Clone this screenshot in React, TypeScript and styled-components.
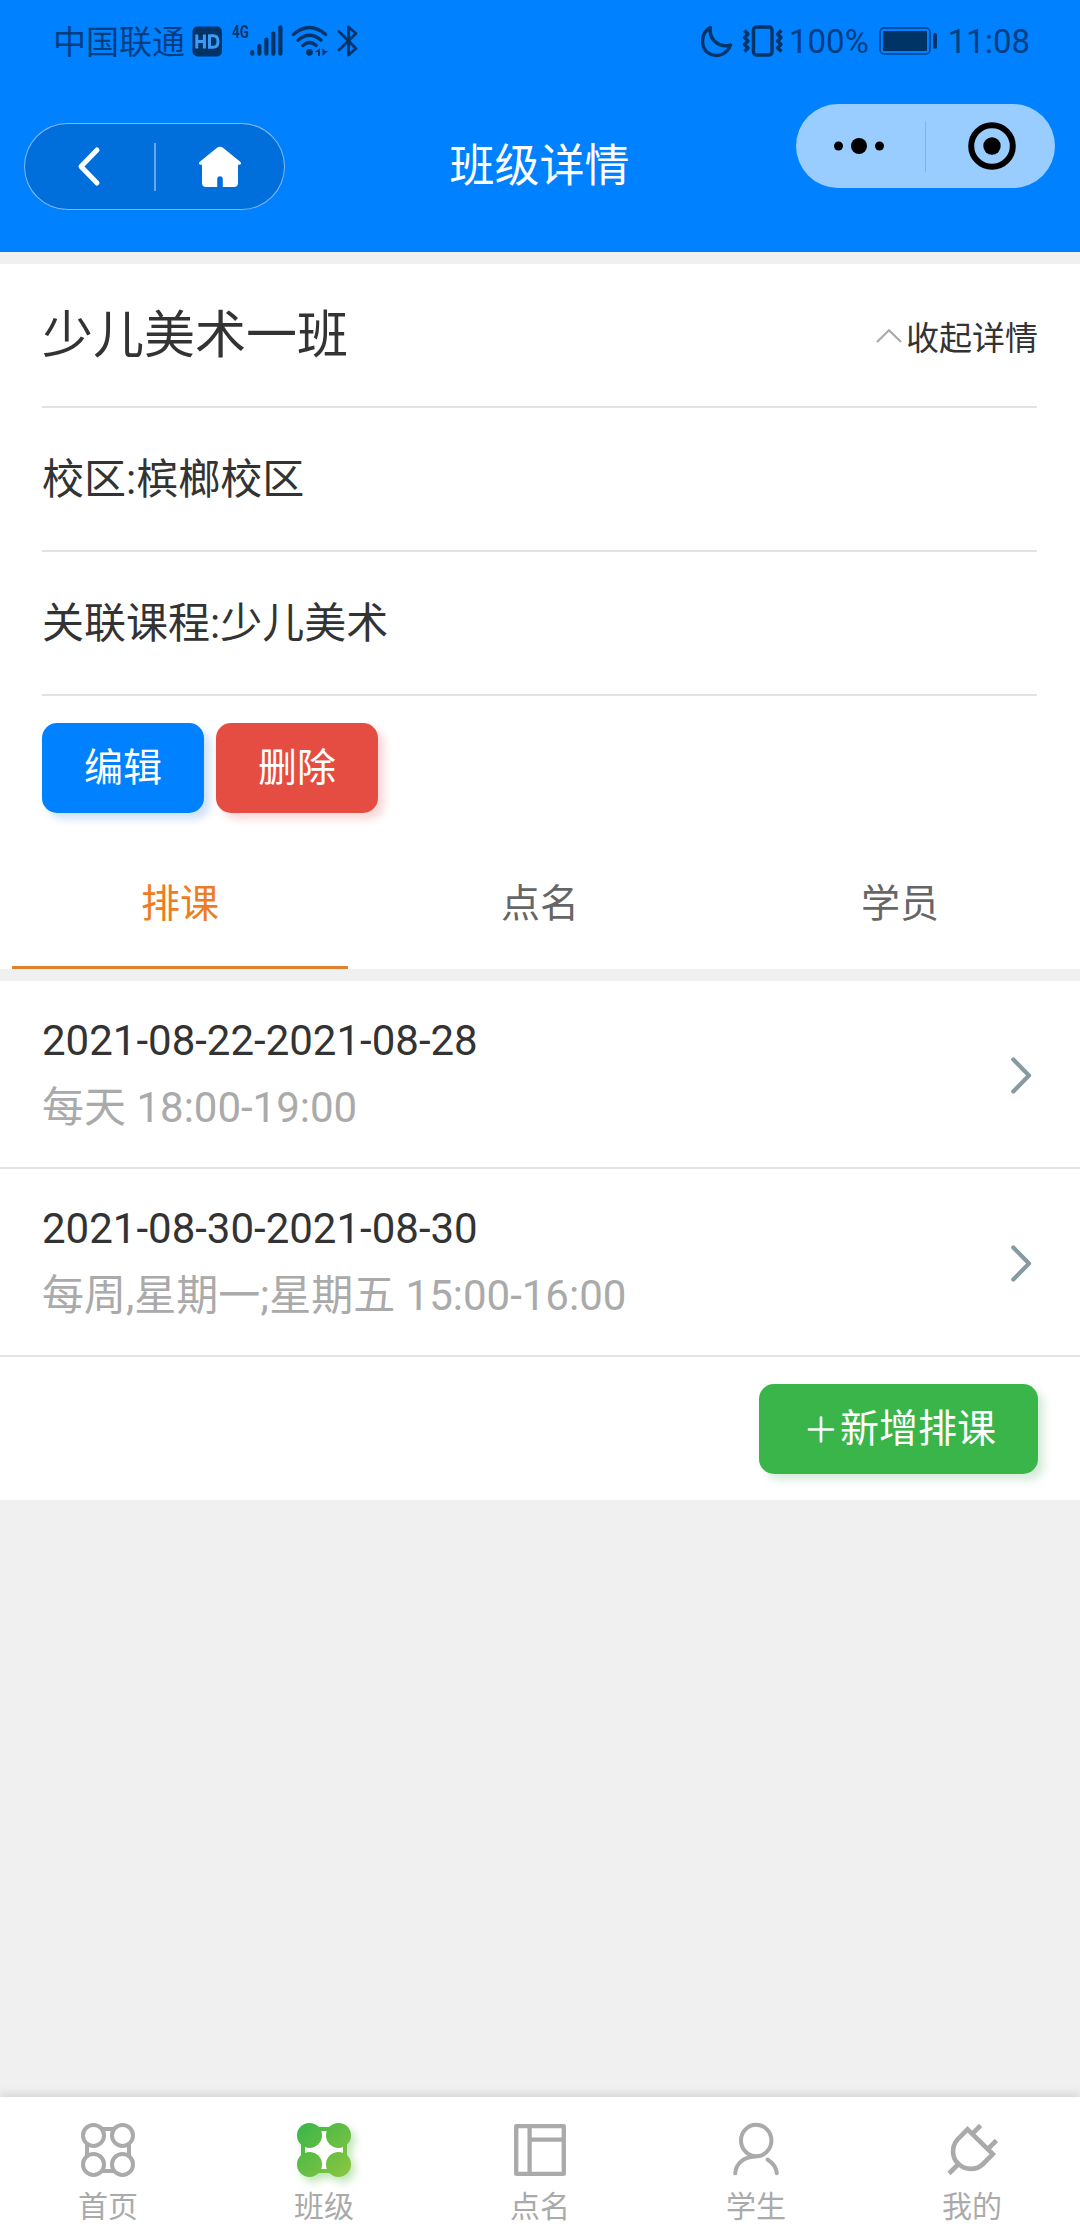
import React from "react";
import styled, { createGlobalStyle, css } from "styled-components";

const Global = createGlobalStyle`
  * { box-sizing: border-box; }
  html, body { margin: 0; padding: 0; background: #f0f0f0; }
  body {
    font-family: Roboto, "Noto Sans CJK SC", sans-serif;
    font-weight: 400;
    color: #333;
  }
`;

const Screen = styled.div`
  width: 1080px;
  height: 2240px;
  display: flex;
  flex-direction: column;
  background: #f0f0f0;
  overflow: hidden;
`;

const Header = styled.header`
  height: 252px;
  flex: none;
  background: #0081ff;
`;

const StatusBar = styled.div`
  height: 82px;
  padding: 0 50px 0 53px;
  display: flex;
  justify-content: space-between;
  color: #003e80;
  font-size: 33px;
  line-height: 78px;
  svg { display: block; flex: none; }
`;

const StatusGroup = styled.div`
  display: flex;
  align-items: center;
`;

const StatusText = styled.span<{ $ml?: number; $drop?: number }>`
  margin-left: ${(p) => p.$ml ?? 0}px;
  padding-top: ${(p) => p.$drop ?? 0}px;
`;

const NavBar = styled.div`
  height: 170px;
  display: grid;
  grid-template-columns: 1fr auto 1fr;
  padding: 0 25px 0 24px;
`;

const NavTitle = styled.h1`
  margin: 0;
  font-size: 45px;
  line-height: 60px;
  font-weight: 400;
  color: #fff;
  padding-top: 55px;
`;

const BackCapsule = styled.div`
  width: 261px;
  height: 87px;
  margin-top: 41px;
  border: 1.5px solid rgba(255, 255, 255, 0.5);
  border-radius: 44px;
  background: #006edb;
  display: flex;
  align-items: center;
  svg { display: block; }
`;

const MenuCapsule = styled.div`
  width: 259px;
  height: 84px;
  margin-top: 22px;
  justify-self: end;
  border-radius: 42px;
  background: #99cdff;
  display: flex;
  align-items: center;
`;

const CapsuleHalf = styled.div<{ $left?: number; $right?: number }>`
  flex: 1;
  display: flex;
  justify-content: center;
  padding: 0 ${(p) => p.$right ?? 0}px 0 ${(p) => p.$left ?? 0}px;
`;

const CapsuleRule = styled.i<{ $h: number; $w: number; $c: string }>`
  width: ${(p) => p.$w}px;
  height: ${(p) => p.$h}px;
  background: ${(p) => p.$c};
`;

const Card = styled.section`
  flex: none;
  margin-top: 12px;
  background: #fff;
`;

const Details = styled.div`
  padding: 0 42px;
`;

const DetailRow = styled.div`
  height: 144px;
  display: flex;
  align-items: center;
  justify-content: space-between;
  border-bottom: 2px solid #e2e2e2;
  font-size: 42px;
  padding-bottom: 8px;
  margin-right: 1px;
`;

const ClassName = styled.h2`
  margin: 0;
  font-size: 51px;
  font-weight: 400;
`;

const Toggle = styled.div`
  display: flex;
  align-items: center;
  gap: 4px;
  margin-right: -1px;
  padding-top: 10px;
  font-size: 33px;
`;

const Actions = styled.div`
  height: 144px;
  padding-top: 27px;
  display: flex;
  gap: 12px;
`;

const tones = {
  blue: css`background: #0081ff; box-shadow: 6px 6px 8px rgba(0, 102, 204, 0.2);`,
  red: css`background: #e54d42; box-shadow: 6px 6px 8px rgba(217, 55, 44, 0.2);`,
  green: css`background: #39b54a; box-shadow: 6px 6px 8px rgba(48, 156, 63, 0.2);`,
};

const Button = styled.button<{ $tone: keyof typeof tones }>`
  height: 90px;
  padding: 0 42px;
  border: 0;
  border-radius: 15px;
  color: #fff;
  font: inherit;
  font-size: 39px;
  line-height: 1;
  display: flex;
  align-items: center;
  svg { margin-top: -3px; }
  ${(p) => tones[p.$tone]}
`;

const Tabs = styled.div`
  height: 129px;
  display: grid;
  grid-template-columns: repeat(3, 1fr);
`;

const Tab = styled.div<{ $active?: boolean }>`
  margin: 0 12px;
  padding-top: 3px;
  text-align: center;
  font-size: 39px;
  line-height: 122px;
  height: 129px;
  color: ${(p) => (p.$active ? "#ed7d21" : "#666")};
  border-bottom: 3px solid ${(p) => (p.$active ? "#e08031" : "transparent")};
`;

const Schedule = styled.div`
  height: 188px;
  padding: 0 48px 0 42px;
  display: flex;
  align-items: center;
  justify-content: space-between;
  border-bottom: 2px solid #e2e2e2;
  font-size: 42px;
  line-height: 67px;
  svg { margin-top: 1px; }
`;

const Dates = styled.div``;

const Times = styled.div`
  color: #aaa;
`;

const AddRow = styled.div`
  height: 143px;
  padding: 27px 42px 0;
  display: flex;
  justify-content: flex-end;
  align-items: flex-start;
`;

const TabBar = styled.nav`
  height: 143px;
  flex: none;
  margin-top: auto;
  background: #fff;
  box-shadow: 0 -3px 9px rgba(0, 0, 0, 0.12);
  display: grid;
  grid-template-columns: repeat(5, 1fr);
`;

const TabBarItem = styled.div`
  display: flex;
  flex-direction: column;
  align-items: center;
  padding-top: 23px;
  font-size: 30px;
  line-height: 44px;
  color: #aaa;
  svg { display: block; overflow: visible; margin-bottom: 5px; }
`;

const INK = "#003366";

const HdIcon = () => (
  <svg width="31" height="31" viewBox="0 0 31 31" style={{ marginLeft: 7 }}>
    <rect x="0.5" y="0.5" width="29.5" height="30" rx="5" fill={INK} />
    <g stroke="#3d9bf5" strokeWidth="3" fill="none">
      <path d="M4.8 8.5v14M12.4 8.5v14M4.8 15.5h8" />
      <path d="M17.5 9.8h3.700q4.800 0 4.800 5.700t-4.800 5.700H17.500z" />
    </g>
  </svg>
);

const FourG = styled.span`
  font-weight: 700;
  font-size: 19px;
  line-height: 20px;
  height: 38px;
  margin-left: 9px;
  width: 18px;
  color: ${INK};
  span { display: inline-block; transform: scaleX(0.7); transform-origin: 0 0; }
`;

const SignalIcon = () => (
  <svg width="33" height="32" viewBox="0 0 33 32">
    <g stroke={INK} strokeWidth="4.2" strokeLinecap="round">
      <path d="M2.3 27.2v1.5M9.3 21v7.7M16.4 14.5v14.2M23.3 8.5v20.2M30.4 2.3v26.4" />
    </g>
  </svg>
);

const WifiIcon = () => (
  <svg width="38" height="32" viewBox="0 0 38 32" style={{ marginLeft: 8 }}>
    <g fill="none" stroke={INK} strokeWidth="3.2" strokeLinecap="round">
      <path d="M2.3 9.5Q18.5-4.500 34.700 9.500" />
      <path d="M7 15.200Q18.500 5.300 30 15.200" />
      <path d="M11.800 20.500Q18.500 14.500 25.200 20.500" />
    </g>
    <circle cx="18.500" cy="27.300" r="3.400" fill={INK} />
    <path d="M24 27l5-4v8h-2v-4zM31.500 23v8l5.500-5h-3z" fill={INK} />
  </svg>
);

const BluetoothIcon = () => (
  <svg width="22" height="34" viewBox="0 0 22 34" style={{ marginLeft: 8 }}>
    <path d="M2 7.500L19 24.500 11.500 31V3L19 9.500 2 26" fill="none" stroke={INK} strokeWidth="2.800" strokeLinecap="round" strokeLinejoin="round" />
  </svg>
);

const MoonIcon = () => (
  <svg width="32" height="33" viewBox="0 0 32 33">
    <path d="M9.300 2.500C-.5 8-.5 21.500 6.500 27.500c8 6 19.500 2.500 23-7.500C19 23.500 7.500 15 9.300 2.500z" fill="none" stroke={INK} strokeWidth="3.400" strokeLinejoin="round" />
  </svg>
);

const VibrateIcon = () => (
  <svg width="42" height="34" viewBox="0 0 42 34" style={{ marginLeft: 9 }}>
    <rect x="11.500" y="3" width="18.500" height="28" rx="3" fill="none" stroke={INK} strokeWidth="3.400" />
    <g fill="none" stroke={INK} strokeWidth="3.400" strokeLinejoin="round">
      <path d="M2.500 6.500l3.500 3.500-3.500 3.500L6 17l-3.500 3.500L6 24l-3.500 3.500" />
      <path d="M39.500 6.500l-4 3.500 3.500 3.500-3.500 3.500 3.500 3.500-3.500 3.500 4 3.500" />
    </g>
  </svg>
);

const BatteryIcon = () => (
  <svg width="60" height="29" viewBox="0 0 60 29" style={{ marginLeft: 10 }}>
    <rect x="1" y="1" width="50" height="26" rx="4" fill="none" stroke="#00438c" strokeWidth="1.500" />
    <rect x="4" y="4" width="44" height="20" rx="1" fill={INK} />
    <rect x="54" y="6" width="4" height="16" rx="2" fill={INK} />
  </svg>
);

const BackIcon = () => (
  <svg width="26" height="42" viewBox="0 0 26 42">
    <path d="M21 4L5 20.500 21 37" fill="none" stroke="#fff" strokeWidth="5" strokeLinecap="round" strokeLinejoin="round" />
  </svg>
);

const HomeIcon = () => (
  <svg width="44" height="42" viewBox="0 0 44 42">
    <path d="M19 1.700q3-2 6 0L42.500 16q1.500 2.500-1.500 2.800h-1V37q0 4-4 4H24.800V32.500q-.3-2.300-2.800-2.300t-2.800 2.300V41H8q-4 0-4-4V18.800H3Q0 18.500 1.500 16z" fill="#fff" />
  </svg>
);

const MoreIcon = () => (
  <svg width="50" height="18" viewBox="0 0 50 18">
    <circle cx="4.500" cy="9" r="4.500" />
    <circle cx="25" cy="9" r="8" />
    <circle cx="45.500" cy="9" r="4.500" />
  </svg>
);

const TargetIcon = () => (
  <svg width="48" height="48" viewBox="0 0 48 48">
    <circle cx="24" cy="24" r="20.800" fill="none" stroke="#000" strokeWidth="6" />
    <circle cx="24" cy="24" r="8.700" />
  </svg>
);

const FoldIcon = () => (
  <svg width="27" height="18" viewBox="0 0 27 18">
    <path d="M2 15L14 3.200 26 15" fill="none" stroke="#aaa" strokeWidth="2.200" />
  </svg>
);

const RowArrow = () => (
  <svg width="22" height="38" viewBox="0 0 22 38">
    <path d="M3.300 3.500L19 19.500 3.300 35.500" fill="none" stroke="#8799a3" strokeWidth="4.200" strokeLinecap="round" strokeLinejoin="round" />
  </svg>
);

const PlusIcon = () => (
  <svg width="39" height="39" viewBox="0 0 39 39">
    <path d="M8 21.500h24M20 9.500v24" stroke="#fff" strokeWidth="2.700" strokeLinecap="round" />
  </svg>
);

const corners = [
  [15.5, 15.4],
  [44.500, 15.4],
  [15.5, 44.400],
  [44.500, 44.400],
];

const CloverIcon = ({ active }: { active?: boolean }) => (
  <svg
    width="60"
    height="60"
    viewBox="0 0 60 60"
    style={active ? { filter: "drop-shadow(4px 5px 4px rgba(90,190,70,.4))" } : undefined}
  >
    <defs>
      <linearGradient id="leaf" gradientUnits="userSpaceOnUse" x1="3" y1="3" x2="57" y2="57">
        <stop offset="0" stopColor="#39b54a" />
        <stop offset="1" stopColor="#8dc63f" />
      </linearGradient>
    </defs>
    <rect x="9" y="9" width="42" height="42" fill="#fff" stroke={active ? "url(#leaf)" : "#aaa"} strokeWidth="4" />
    {corners.map(([x, y]) => (
      <circle
        key={`${x}-${y}`}
        cx={x}
        cy={y}
        r={active ? 12.500 : 10.500}
        fill={active ? "url(#leaf)" : "#fff"}
        stroke={active ? "none" : "#aaa"}
        strokeWidth="4"
      />
    ))}
  </svg>
);

const BoardIcon = () => (
  <svg width="60" height="60" viewBox="0 0 60 60">
    <path d="M6.200 6.200h47.600v47.600H6.200zM19.600 6.200v47.600M19.600 19.700h34" fill="none" stroke="#aaa" strokeWidth="4.300" strokeLinejoin="round" />
  </svg>
);

const PersonIcon = () => (
  <svg width="60" height="60" viewBox="0 0 60 60">
    <g fill="none" stroke="#aaa" strokeWidth="4" strokeLinecap="round">
      <ellipse cx="30.200" cy="20.500" rx="15.200" ry="15.800" />
      <path d="M29 36.500C18 37 10 43 9.200 53.300" />
      <path d="M41.500 39.500C47 43 50.300 48 50.800 53.300" />
    </g>
  </svg>
);

const PlugIcon = () => (
  <svg width="60" height="60" viewBox="0 0 60 60">
    <path
      d="M25.500 9.300L15.500 19.500C9 27 9.800 38 16.500 43.800C23.500 50.500 34.500 50.500 41 44L50.800 34zM38.600 5.500L30.500 13.600M54.400 20.500L46 28.900M15.500 45L7 53.500"
      fill="none"
      stroke="#aaa"
      strokeWidth="4.600"
    />
  </svg>
);

const schedules = [
  { dates: "2021-08-22-2021-08-28", times: "每天 18:00-19:00" },
  { dates: "2021-08-30-2021-08-30", times: "每周,星期一;星期五 15:00-16:00" },
];

const navItems = [
  { label: "首页", icon: <CloverIcon /> },
  { label: "班级", icon: <CloverIcon active /> },
  { label: "点名", icon: <BoardIcon /> },
  { label: "学生", icon: <PersonIcon /> },
  { label: "我的", icon: <PlugIcon /> },
];

export default function App() {
  return (
    <Screen>
      <Global />
      <Header>
        <StatusBar>
          <StatusGroup>
            <StatusText $drop={3}>中国联通</StatusText>
            <HdIcon />
            <FourG><span>4G</span></FourG>
            <SignalIcon />
            <WifiIcon />
            <BluetoothIcon />
          </StatusGroup>
          <StatusGroup>
            <MoonIcon />
            <VibrateIcon />
            <StatusText $ml={5} $drop={2}>100%</StatusText>
            <BatteryIcon />
            <StatusText $ml={9} $drop={2}>11:08</StatusText>
          </StatusGroup>
        </StatusBar>
        <NavBar>
          <BackCapsule>
            <CapsuleHalf $right={1}><BackIcon /></CapsuleHalf>
            <CapsuleRule $w={2} $h={48} $c="#66a8e9" />
            <CapsuleHalf $left={1}><HomeIcon /></CapsuleHalf>
          </BackCapsule>
          <NavTitle>班级详情</NavTitle>
          <MenuCapsule>
            <CapsuleHalf $right={2}><MoreIcon /></CapsuleHalf>
            <CapsuleRule $w={1} $h={51} $c="#7fb3e6" />
            <CapsuleHalf $left={3}><TargetIcon /></CapsuleHalf>
          </MenuCapsule>
        </NavBar>
      </Header>

      <Card>
        <Details>
          <DetailRow>
            <ClassName>少儿美术一班</ClassName>
            <Toggle><FoldIcon />收起详情</Toggle>
          </DetailRow>
          <DetailRow>校区:槟榔校区</DetailRow>
          <DetailRow>关联课程:少儿美术</DetailRow>
          <Actions>
            <Button $tone="blue">编辑</Button>
            <Button $tone="red">删除</Button>
          </Actions>
        </Details>
        <Tabs>
          <Tab $active>排课</Tab>
          <Tab>点名</Tab>
          <Tab>学员</Tab>
        </Tabs>
      </Card>

      <Card>
        {schedules.map((s) => (
          <Schedule key={s.dates}>
            <div>
              <Dates>{s.dates}</Dates>
              <Times>{s.times}</Times>
            </div>
            <RowArrow />
          </Schedule>
        ))}
        <AddRow>
          <Button $tone="green"><PlusIcon />新增排课</Button>
        </AddRow>
      </Card>

      <TabBar>
        {navItems.map((n) => (
          <TabBarItem key={n.label}>
            {n.icon}
            {n.label}
          </TabBarItem>
        ))}
      </TabBar>
    </Screen>
  );
}
